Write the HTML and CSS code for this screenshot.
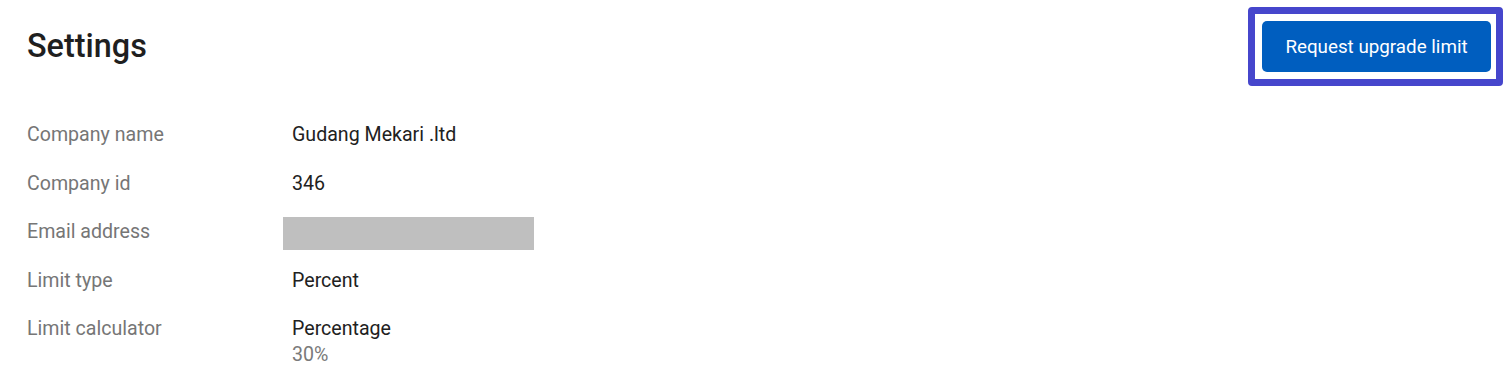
FILE: index.html
```html
<!DOCTYPE html>
<html lang="en">
<head>
<meta charset="utf-8">
<title>Settings</title>
<link rel="stylesheet" href="styles.css">
</head>
<body>
<main class="page">
  <header class="page-header">
    <h1 class="page-title">Settings</h1>
    <span class="focus-ring"><button class="btn-primary" type="button">Request upgrade limit</button></span>
  </header>
  <dl class="details">
    <div class="detail-row">
      <dt class="detail-label">Company name</dt>
      <dd class="detail-value">Gudang Mekari .ltd</dd>
    </div>
    <div class="detail-row">
      <dt class="detail-label">Company id</dt>
      <dd class="detail-value">346</dd>
    </div>
    <div class="detail-row">
      <dt class="detail-label">Email address</dt>
      <dd class="detail-value"><span class="redacted"></span></dd>
    </div>
    <div class="detail-row">
      <dt class="detail-label">Limit type</dt>
      <dd class="detail-value">Percent</dd>
    </div>
    <div class="detail-row">
      <dt class="detail-label">Limit calculator</dt>
      <dd class="detail-value">Percentage<span class="detail-sub">30%</span></dd>
    </div>
  </dl>
</main>
</body>
</html>
```
FILE: styles.css
```css
* { box-sizing: border-box; }
html, body { margin: 0; padding: 0; background: #ffffff; }
body {
  font-family: Roboto, "Liberation Sans", Arial, sans-serif;
  color: #212121;
}
.page {
  padding: 6px 9px 0 27px;
}
.page-header {
  display: flex;
  align-items: center;
  justify-content: space-between;
  height: 81px;
}
.page-title {
  margin: 0;
  font-size: 32.4px;
  font-weight: 500;
  line-height: 51px;
  color: #1f1f1f;
}
.focus-ring {
  display: block;
  padding: 7px 5px 7px 7px;
  border: 7px solid #4646cc;
  border-radius: 4px;
}
.btn-primary {
  display: block;
  height: 51px;
  width: 229px;
  padding: 0;
  border: 0;
  border-radius: 5px;
  background: #005ebf;
  color: #ffffff;
  font-family: Roboto, "Liberation Sans", Arial, sans-serif;
  font-size: 18.8px;
  font-weight: 400;
  white-space: nowrap;
  text-align: center;
  cursor: pointer;
}
.details {
  margin: 35px 0 0 0;
  display: flex;
  flex-direction: column;
  gap: 22.6px;
}
.detail-row {
  display: grid;
  grid-template-columns: 265px 1fr;
  font-size: 19.6px;
  line-height: 26px;
}
.detail-label {
  margin: 0;
  color: #767676;
}
.detail-value {
  margin: 0;
  color: #212121;
  display: flex;
  flex-direction: column;
}
.detail-sub {
  color: #7a7a7a;
}
.redacted {
  display: block;
  width: 251px;
  height: 33px;
  margin: -2px 0 -5px -9px;
  background: #bfbfbf;
}
```
